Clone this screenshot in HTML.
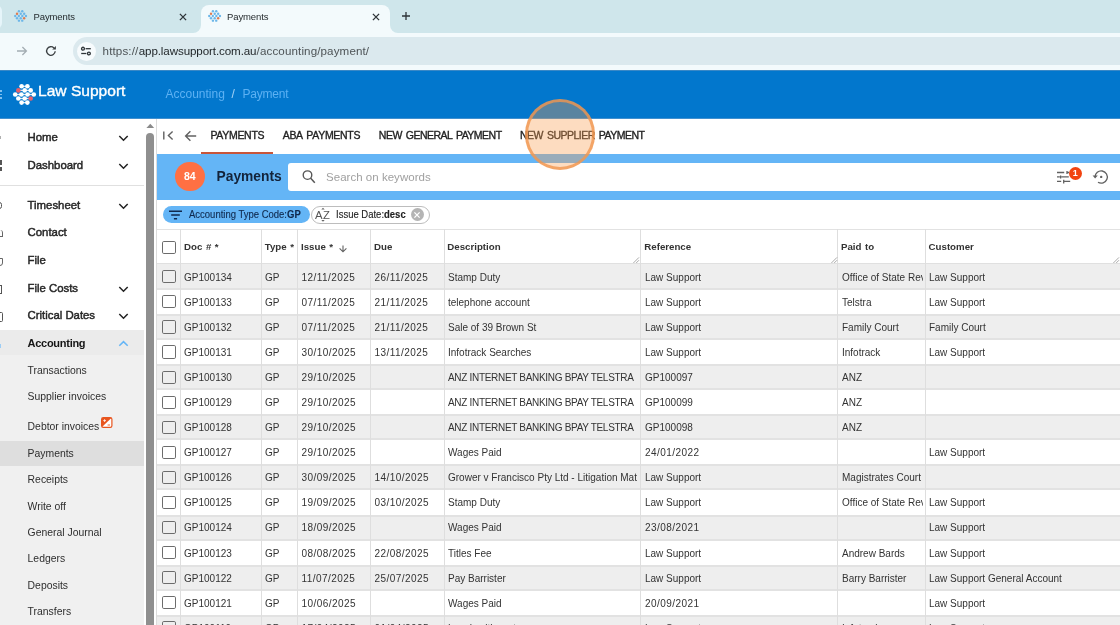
<!DOCTYPE html>
<html>
<head>
<meta charset="utf-8">
<title>Payments</title>
<style>
*{box-sizing:border-box;margin:0;padding:0}
html,body{width:1120px;height:625px;overflow:hidden;background:#fff;font-family:"Liberation Sans",sans-serif;color:#212121}
.abs{position:absolute}
svg{display:block;overflow:visible}
#root{position:relative;width:1120px;height:625px;overflow:hidden;will-change:transform}
/* browser chrome */
#tabbar{left:0;top:0;width:1120px;height:33px;background:#cfe6eb}
#tab0{left:-10px;top:5px;width:11.5px;height:24px;background:#e6f5fa;border-radius:8px}
#tab2{left:201px;top:5px;width:189px;height:28px;background:#f3fafc;border-radius:8px 8px 0 0}
.foot{top:25px;width:8px;height:8px;background:#f3fafc}
.foot i{position:absolute;left:0;top:0;width:8px;height:8px;background:#cfe6eb}
.tabtxt{font-size:9.5px;color:#252b2e;top:10.5px;letter-spacing:-0.12px;white-space:nowrap}
#urlbar{left:0;top:32.5px;width:1120px;height:38px;background:#f3fafc}
#pill{left:72.5px;top:37.25px;width:1060px;height:27.75px;border-radius:14px;background:#dbe9ee}
#pillc{left:76.5px;top:41.75px;width:19px;height:19px;border-radius:10px;background:#f7fbfd}
.url{top:43.5px;font-size:11.6px;white-space:nowrap}
/* app header */
#hdr{left:0;top:70px;width:1120px;height:49px;background:#0277cd;border-top:1px solid #3a88c6;border-bottom:1px solid #4190cf}
#brand{left:37.6px;top:83.4px;font-size:14.6px;color:#fff;white-space:nowrap;transform-origin:0 0;transform:scaleX(1.067);-webkit-text-stroke:0.35px #fff}
.crumb{top:86.5px;font-size:12px;color:#5db1f3;white-space:nowrap}
/* sidebar */
#side{left:0;top:119px;width:145px;height:506px;background:#fff}
#sideacc{left:0;top:330px;width:144px;height:296px;background:#f0f0f0}
#sideacch{left:0;top:330px;width:144px;height:25px;background:#ebebeb}
#sidesel{left:0;top:440.8px;width:144px;height:25.2px;background:#dedede}
#sdiv{left:0;top:185px;width:144px;height:1px;background:#e0e0e0}
.nav{left:27.6px;font-size:11.4px;color:#262626;white-space:nowrap;letter-spacing:-0.02px;-webkit-text-stroke:0.45px #262626}
.sub{left:27.6px;font-size:10.4px;color:#2e2e2e;white-space:nowrap}
#sbthumb{left:146.3px;top:133px;width:7.7px;height:500px;background:#8f8f8f;border-radius:4px}
#vline{left:156px;top:119px;width:1px;height:506px;background:#dcdcdc}
/* main */
.mtab{top:128.8px;font-size:10.5px;color:#222;white-space:nowrap;letter-spacing:-0.3px;-webkit-text-stroke:0.35px #222}
#ul{left:201px;top:151.5px;width:72px;height:2.3px;background:#c8553a}
#band{left:157px;top:153.8px;width:963px;height:45.8px;background:#64b5f6}
#cnt{left:175px;top:162px;width:29.5px;height:29px;border-radius:15px;background:#ff7043;color:#fff;font-size:10.5px;font-weight:bold;text-align:center;line-height:29px}
#ttl{left:216.5px;top:169px;font-size:13.8px;font-weight:bold;color:#13233a;white-space:nowrap}
#search{left:288.2px;top:162.7px;width:840px;height:28.6px;background:#fff;border-radius:3px}
#ph{left:326px;top:170.8px;font-size:11.5px;color:#a0a0a0;white-space:nowrap;letter-spacing:0.03px}
#chip1{left:163px;top:206.3px;width:146.8px;height:17px;border-radius:9px;background:#64b5f6}
#chip2{left:310.5px;top:206.2px;width:119px;height:17.4px;border-radius:9px;background:#fff;border:1px solid #bdbdbd}
.chiptxt{top:208.9px;font-size:10.2px;transform-origin:0 50%;transform:scaleX(0.932);-webkit-text-stroke:0.12px;color:#10294d;white-space:nowrap}
/* table */
#thead{left:157px;top:229px;width:963px;height:35px;background:#fff;border-top:1px solid #e2e2e2;border-bottom:1px solid #e0e0e0}
.th{top:241.3px;font-size:9.7px;font-weight:bold;color:#333;white-space:nowrap;word-spacing:0.9px}
.rowg{left:157px;width:963px;height:26px;background:#eeeeee;border-top:2px solid #e2e2e2;border-bottom:2px solid #e2e2e2}
.rowt{left:157px;width:963px;height:12px}
.c{position:absolute;top:0;font-size:10px;color:#333;white-space:nowrap;overflow:hidden}
.c.d{letter-spacing:0.45px}
.c.n{letter-spacing:-0.31px}
.vl{top:229px;width:1px;height:396px;background:#dedede}
.cb{position:absolute;left:5.4px;top:-1.6px;width:13.2px;height:13.2px;border:1.7px solid #6c6c6c;border-radius:1.8px;background:transparent}
#halo{left:524.8px;top:99.4px;width:70.5px;height:70.5px;border-radius:36px;background:rgba(249,157,78,0.356);border:3px solid rgba(240,150,80,0.8)}
</style>
</head>
<body>
<div id="root">
<div class="abs" id="tabbar"></div>
<div class="abs" id="tab0"></div>
<div class="abs" id="tab2"></div>
<div class="abs foot" style="left:193px"><i style="border-radius:0 0 8px 0"></i></div>
<div class="abs foot" style="left:390px"><i style="border-radius:0 0 0 8px"></i></div>
<svg class="abs" style="left:13.75px;top:10px" width="13.20" height="12.05" viewBox="0 0 23 21"><circle cx="8.6" cy="2.3" r="2.1" fill="#6cb6e8"/><circle cx="14.4" cy="2.3" r="2.1" fill="#6cb6e8"/><circle cx="5.3" cy="6.4" r="2.1" fill="#de7a50"/><circle cx="11.7" cy="6.4" r="2.1" fill="#6cb6e8"/><circle cx="17.7" cy="6.4" r="2.1" fill="#6cb6e8"/><circle cx="2.2" cy="10.5" r="2.1" fill="#6cb6e8"/><circle cx="8.4" cy="10.5" r="2.1" fill="#6cb6e8"/><circle cx="14.6" cy="10.5" r="2.1" fill="#6cb6e8"/><circle cx="20.8" cy="10.5" r="2.1" fill="#6cb6e8"/><circle cx="5.3" cy="14.5" r="2.1" fill="#6cb6e8"/><circle cx="11.7" cy="14.5" r="2.1" fill="#6cb6e8"/><circle cx="17.7" cy="14.5" r="2.1" fill="#de7a50"/><circle cx="8.6" cy="18.6" r="2.1" fill="#6cb6e8"/><circle cx="14.4" cy="18.6" r="2.1" fill="#6cb6e8"/></svg>
<svg class="abs" style="left:207.5px;top:10px" width="13.20" height="12.05" viewBox="0 0 23 21"><circle cx="8.6" cy="2.3" r="2.1" fill="#6cb6e8"/><circle cx="14.4" cy="2.3" r="2.1" fill="#6cb6e8"/><circle cx="5.3" cy="6.4" r="2.1" fill="#de7a50"/><circle cx="11.7" cy="6.4" r="2.1" fill="#6cb6e8"/><circle cx="17.7" cy="6.4" r="2.1" fill="#6cb6e8"/><circle cx="2.2" cy="10.5" r="2.1" fill="#6cb6e8"/><circle cx="8.4" cy="10.5" r="2.1" fill="#6cb6e8"/><circle cx="14.6" cy="10.5" r="2.1" fill="#6cb6e8"/><circle cx="20.8" cy="10.5" r="2.1" fill="#6cb6e8"/><circle cx="5.3" cy="14.5" r="2.1" fill="#6cb6e8"/><circle cx="11.7" cy="14.5" r="2.1" fill="#6cb6e8"/><circle cx="17.7" cy="14.5" r="2.1" fill="#de7a50"/><circle cx="8.6" cy="18.6" r="2.1" fill="#6cb6e8"/><circle cx="14.4" cy="18.6" r="2.1" fill="#6cb6e8"/></svg>
<div class="abs tabtxt" style="left:33.5px">Payments</div>
<div class="abs tabtxt" style="left:227px">Payments</div>
<svg class="abs" style="left:178px;top:11.600000000000001px" width="10" height="10" viewBox="-5 -5 10 10"><path d="M-3.1 -3.1 L3.1 3.1 M3.1 -3.1 L-3.1 3.1" stroke="#2d3337" stroke-width="1.3" fill="none"/></svg>
<svg class="abs" style="left:371.2px;top:11.600000000000001px" width="10" height="10" viewBox="-5 -5 10 10"><path d="M-3.1 -3.1 L3.1 3.1 M3.1 -3.1 L-3.1 3.1" stroke="#2d3337" stroke-width="1.3" fill="none"/></svg>
<svg class="abs" style="left:401px;top:11.4px" width="10" height="10" viewBox="-5 -5 10 10"><path d="M-4 0 H4 M0 -4 V4" stroke="#2d3337" stroke-width="1.3" fill="none"/></svg>
<div class="abs" id="urlbar"></div>
<div class="abs" id="pill"></div>
<div class="abs" id="pillc"></div>
<svg class="abs" style="left:16px;top:45px" width="12" height="12" viewBox="0 0 12 12"><path d="M1 6 H10.3 M6.4 2 L10.4 6 L6.4 10" stroke="#a3adb2" stroke-width="1.3" fill="none"/></svg>
<svg class="abs" style="left:45px;top:45px" width="12" height="12" viewBox="0 0 12 12"><path d="M10.2 6.3 A4.3 4.3 0 1 1 8.9 2.9" stroke="#3a3f42" stroke-width="1.35" fill="none"/><path d="M10.9 0.9 V4.6 H7.2 Z" fill="#3a3f42"/></svg>
<svg class="abs" style="left:80px;top:45.2px" width="12" height="12" viewBox="0 0 12 12"><g stroke="#30363a" stroke-width="1.3" fill="none"><circle cx="3" cy="3.7" r="1.45"/><path d="M5.6 3.7 H10.8"/><circle cx="8.9" cy="8.5" r="1.45"/><path d="M1.2 8.5 H6.3"/></g></svg>
<div class="abs url" style="left:102.6px;color:#4d5356;letter-spacing:0.12px">https://</div>
<div class="abs url" style="left:138.7px;color:#1d2225;letter-spacing:-0.1px">app.lawsupport.com.au</div>
<div class="abs url" style="left:256.6px;color:#4d5356;letter-spacing:0.12px">/accounting/payment/</div>
<div class="abs" id="hdr"></div>
<div class="abs" style="left:0;top:90px;width:2px;height:1.6px;background:#7fc0f0"></div>
<div class="abs" style="left:0;top:93.5px;width:2px;height:1.6px;background:#7fc0f0"></div>
<div class="abs" style="left:0;top:97px;width:2px;height:1.6px;background:#7fc0f0"></div>
<svg class="abs" style="left:13.1px;top:84.2px" width="23.00" height="21.00" viewBox="0 0 23 21"><path d="M8.6 2.3 H14.4" stroke="#ffffff" stroke-width="1.3" opacity="0.85"/><path d="M5.3 6.4 H17.7" stroke="#ffffff" stroke-width="1.3" opacity="0.85"/><path d="M2.2 10.5 H20.8" stroke="#ffffff" stroke-width="1.3" opacity="0.85"/><path d="M5.3 14.5 H17.7" stroke="#ffffff" stroke-width="1.3" opacity="0.85"/><path d="M8.6 18.6 H14.4" stroke="#ffffff" stroke-width="1.3" opacity="0.85"/><circle cx="8.6" cy="2.3" r="2.3" fill="#ffffff"/><circle cx="14.4" cy="2.3" r="2.3" fill="#ffffff"/><circle cx="5.3" cy="6.4" r="2.3" fill="#e8606a"/><circle cx="11.7" cy="6.4" r="2.3" fill="#ffffff"/><circle cx="17.7" cy="6.4" r="2.3" fill="#ffffff"/><circle cx="2.2" cy="10.5" r="2.3" fill="#ffffff"/><circle cx="8.4" cy="10.5" r="2.3" fill="#ffffff"/><circle cx="14.6" cy="10.5" r="2.3" fill="#ffffff"/><circle cx="20.8" cy="10.5" r="2.3" fill="#ffffff"/><circle cx="5.3" cy="14.5" r="2.3" fill="#ffffff"/><circle cx="11.7" cy="14.5" r="2.3" fill="#ffffff"/><circle cx="17.7" cy="14.5" r="2.3" fill="#e8606a"/><circle cx="8.6" cy="18.6" r="2.3" fill="#ffffff"/><circle cx="14.4" cy="18.6" r="2.3" fill="#ffffff"/></svg>
<div class="abs" id="brand">Law Support</div>
<div class="abs crumb" style="left:165.5px">Accounting</div>
<div class="abs crumb" style="left:231.5px;color:#a8d4f7">/</div>
<div class="abs crumb" style="left:242.5px;letter-spacing:-0.22px">Payment</div>
<div class="abs" id="side"></div>
<div class="abs" id="sideacc"></div><div class="abs" id="sideacch"></div>
<div class="abs" id="sidesel"></div>
<div class="abs" id="sdiv"></div>
<div class="abs nav" style="top:131.2px">Home</div>
<svg class="abs" style="left:118px;top:134px" width="11" height="9" viewBox="0 0 11 9"><path d="M1.3 2 L5.5 6.2 L9.7 2" fill="none" stroke="#222" stroke-width="1.5"/></svg>
<div class="abs nav" style="top:159.2px">Dashboard</div>
<svg class="abs" style="left:118px;top:162px" width="11" height="9" viewBox="0 0 11 9"><path d="M1.3 2 L5.5 6.2 L9.7 2" fill="none" stroke="#222" stroke-width="1.5"/></svg>
<div class="abs nav" style="top:199.2px">Timesheet</div>
<svg class="abs" style="left:118px;top:202px" width="11" height="9" viewBox="0 0 11 9"><path d="M1.3 2 L5.5 6.2 L9.7 2" fill="none" stroke="#222" stroke-width="1.5"/></svg>
<div class="abs nav" style="top:226.2px">Contact</div>
<div class="abs nav" style="top:254.2px">File</div>
<div class="abs nav" style="top:282.2px">File Costs</div>
<svg class="abs" style="left:118px;top:285px" width="11" height="9" viewBox="0 0 11 9"><path d="M1.3 2 L5.5 6.2 L9.7 2" fill="none" stroke="#222" stroke-width="1.5"/></svg>
<div class="abs nav" style="top:309.2px">Critical Dates</div>
<svg class="abs" style="left:118px;top:312px" width="11" height="9" viewBox="0 0 11 9"><path d="M1.3 2 L5.5 6.2 L9.7 2" fill="none" stroke="#222" stroke-width="1.5"/></svg>
<div class="abs nav" style="top:337.2px;font-weight:bold;font-size:11px;letter-spacing:-0.28px;-webkit-text-stroke:0;color:#151515">Accounting</div>
<svg class="abs" style="left:118px;top:339px" width="11" height="9" viewBox="0 0 11 9"><path d="M1.3 6.8 L5.5 2.6 L9.7 6.8" fill="none" stroke="#64b5f6" stroke-width="1.5"/></svg>
<div class="abs sub" style="top:365.2px">Transactions</div>
<div class="abs sub" style="top:391.2px">Supplier invoices</div>
<div class="abs sub" style="top:421.2px">Debtor invoices</div>
<div class="abs sub" style="top:448.2px">Payments</div>
<div class="abs sub" style="top:474.2px">Receipts</div>
<div class="abs sub" style="top:501.2px">Write off</div>
<div class="abs sub" style="top:527.2px">General Journal</div>
<div class="abs sub" style="top:553.2px">Ledgers</div>
<div class="abs sub" style="top:580.2px">Deposits</div>
<div class="abs sub" style="top:606.2px">Transfers</div>
<svg class="abs" style="left:146px;top:123px" width="9" height="6" viewBox="0 0 9 6"><path d="M0.4 5 L4.3 0.8 L8.2 5 Z" fill="#8a8a8a"/></svg>
<div class="abs" id="sbthumb"></div>
<div class="abs" id="vline"></div>
<svg class="abs" style="left:101px;top:417px" width="11.5" height="11" viewBox="0 0 11.5 11"><rect x="0.6" y="0.6" width="10.3" height="9.8" rx="1.6" fill="#fff" stroke="#e8551f" stroke-width="1.2"/><path d="M1 1 H10.4 L1 10 Z" fill="#e8551f"/><path d="M2.2 3.6 H5 M3.6 2.2 V5" stroke="#fff" stroke-width="0.8"/><path d="M6.6 8 H9" stroke="#e8551f" stroke-width="0.9"/></svg>
<div class="abs" style="left:0;top:135.8px;width:1.2px;height:3.4px;background:#b0b0b0"></div>
<div class="abs" style="left:0;top:160px;width:2.3px;height:5px;background:#555"></div>
<div class="abs" style="left:0;top:166.6px;width:2.3px;height:4.8px;background:#555"></div>
<div class="abs" style="left:-3px;top:201.5px;width:4.6px;height:7.5px;border:1.3px solid #555;border-radius:3px"></div>
<div class="abs" style="left:-3px;top:230px;width:6px;height:7px;border-right:1.3px solid #666;border-bottom:1.3px solid #666;border-radius:0 3px 0 0"></div>
<div class="abs" style="left:-3px;top:257.5px;width:5.6px;height:8.5px;border:1.3px solid #666;border-radius:0 0 3px 0"></div>
<div class="abs" style="left:-3px;top:284.5px;width:5.2px;height:9.5px;border:1.3px solid #555"></div>
<div class="abs" style="left:-3px;top:311.5px;width:5.6px;height:10.5px;border:1.3px solid #555;border-radius:0 1.5px 1.5px 0"></div>
<div class="abs" style="left:0;top:343.5px;width:1.4px;height:4.5px;background:#9ccdf5"></div>
<svg class="abs" style="left:162px;top:130px" width="12" height="11" viewBox="0 0 12 11"><path d="M1.8 1.4 V9.6 M10.6 1.6 L6.4 5.5 L10.6 9.4" stroke="#616161" stroke-width="1.4" fill="none"/></svg>
<svg class="abs" style="left:184px;top:130px" width="13" height="12" viewBox="0 0 13 12"><path d="M12.2 6 H1.6 M6.4 1.2 L1.6 6 L6.4 10.8" stroke="#616161" stroke-width="1.4" fill="none"/></svg>
<div class="abs mtab" style="left:210.4px">PAYMENTS</div>
<div class="abs mtab" style="left:282.7px;letter-spacing:-0.3px;word-spacing:1.5px">ABA PAYMENTS</div>
<div class="abs mtab" style="left:378.8px;letter-spacing:-0.5px;word-spacing:1.5px">NEW GENERAL PAYMENT</div>
<div class="abs mtab" style="left:520px;letter-spacing:-0.5px;word-spacing:1.5px">NEW SUPPLIER PAYMENT</div>
<div class="abs" id="ul"></div>
<div class="abs" id="band"></div>
<div class="abs" id="cnt">84</div>
<div class="abs" id="ttl">Payments</div>
<div class="abs" id="search"></div>
<svg class="abs" style="left:301px;top:169px" width="16" height="16" viewBox="0 0 16 16"><circle cx="6.5" cy="6.1" r="4.3" stroke="#555" stroke-width="1.35" fill="none"/><path d="M9.7 9.3 L13.8 13.7" stroke="#555" stroke-width="1.5" fill="none"/></svg>
<div class="abs" id="ph">Search on keywords</div>
<svg class="abs" style="left:1056px;top:170px" width="16" height="15" viewBox="0 0 16 15"><g stroke="#616161" stroke-width="1.3" fill="none"><path d="M1 2.5 H8.2 M11 1 V4 M11 2.5 H13"/><path d="M1 6.9 H3.8 M4.6 5.4 V8.4 M5.4 6.9 H12.8"/><path d="M1 11.3 H5.2 M7.7 9.8 V13.4 M7.7 11.3 H14.2"/></g></svg>
<div class="abs" style="left:1068.7px;top:167.3px;width:13px;height:13px;border-radius:7px;background:#f2430f;color:#fff;font-size:9px;font-weight:bold;text-align:center;line-height:13px">1</div>
<svg class="abs" style="left:1092px;top:169px" width="17" height="16" viewBox="0 0 17 16"><path d="M3.1 8 A6.1 6.1 0 1 1 6 13.2" stroke="#616161" stroke-width="1.35" fill="none"/><path d="M0.6 6.6 L3.1 9.6 L5.8 6.6 Z" fill="#616161"/><circle cx="9.2" cy="7.9" r="1.2" fill="#616161"/></svg>
<div class="abs" id="chip1"></div>
<div class="abs" id="chip2"></div>
<svg class="abs" style="left:168px;top:210px" width="15" height="10" viewBox="0 0 15 10"><path d="M1 1.3 H14 M3.2 5 H11.8 M5.9 8.7 H9.1" stroke="#10294d" stroke-width="1.4" fill="none"/></svg>
<div class="abs chiptxt" style="left:189px">Accounting Type Code:<b>GP</b></div>
<div class="abs" style="left:314.9px;top:208.8px;font-size:11.3px;color:#555;letter-spacing:0.5px">AZ</div>
<svg class="abs" style="left:320.6px;top:207.4px" width="4" height="15.4" viewBox="0 0 4 15"><path d="M0.3 2.4 L2 0.6 L3.7 2.4 Z M0.3 12.8 L2 14.6 L3.7 12.8 Z" fill="#666"/></svg>
<div class="abs chiptxt" style="left:336px;color:#222">Issue Date:<b>desc</b></div>
<div class="abs" style="left:410.7px;top:208.1px;width:13px;height:13px;border-radius:7px;background:#b4b4b4"></div>
<svg class="abs" style="left:412.2px;top:209.6px" width="10" height="10" viewBox="-5 -5 10 10"><path d="M-2.6 -2.6 L2.6 2.6 M2.6 -2.6 L-2.6 2.6" stroke="#fff" stroke-width="1.3" fill="none"/></svg>
<div class="abs" id="thead"></div>
<div class="abs rowg" style="top:264px;border-top-color:#eeeeee"></div>
<div class="abs rowt" style="top:271.9px"><span class="cb"></span>
<span class="c" style="left:27px;width:75px">GP100134</span>
<span class="c" style="left:108px;width:31px">GP</span>
<span class="c d" style="left:144.5px;width:67.5px">12/11/2025</span>
<span class="c d" style="left:217.5px;width:67.5px">26/11/2025</span>
<span class="c" style="left:291px;width:189px">Stamp Duty</span>
<span class="c" style="left:488px;width:190px">Law Support</span>
<span class="c" style="left:685px;width:81px">Office of State Revenue</span>
<span class="c" style="left:772px;width:191px">Law Support</span>
</div>
<div class="abs rowt" style="top:296.9px"><span class="cb"></span>
<span class="c" style="left:27px;width:75px">GP100133</span>
<span class="c" style="left:108px;width:31px">GP</span>
<span class="c d" style="left:144.5px;width:67.5px">07/11/2025</span>
<span class="c d" style="left:217.5px;width:67.5px">21/11/2025</span>
<span class="c" style="left:291px;width:189px">telephone account</span>
<span class="c" style="left:488px;width:190px">Law Support</span>
<span class="c" style="left:685px;width:81px">Telstra</span>
<span class="c" style="left:772px;width:191px">Law Support</span>
</div>
<div class="abs rowg" style="top:314px;border-top-color:#e2e2e2"></div>
<div class="abs rowt" style="top:322.0px"><span class="cb"></span>
<span class="c" style="left:27px;width:75px">GP100132</span>
<span class="c" style="left:108px;width:31px">GP</span>
<span class="c d" style="left:144.5px;width:67.5px">07/11/2025</span>
<span class="c d" style="left:217.5px;width:67.5px">21/11/2025</span>
<span class="c" style="left:291px;width:189px">Sale of 39 Brown St</span>
<span class="c" style="left:488px;width:190px">Law Support</span>
<span class="c" style="left:685px;width:81px">Family Court</span>
<span class="c" style="left:772px;width:191px">Family Court</span>
</div>
<div class="abs rowt" style="top:347.0px"><span class="cb"></span>
<span class="c" style="left:27px;width:75px">GP100131</span>
<span class="c" style="left:108px;width:31px">GP</span>
<span class="c d" style="left:144.5px;width:67.5px">30/10/2025</span>
<span class="c d" style="left:217.5px;width:67.5px">13/11/2025</span>
<span class="c" style="left:291px;width:189px">Infotrack Searches</span>
<span class="c" style="left:488px;width:190px">Law Support</span>
<span class="c" style="left:685px;width:81px">Infotrack</span>
<span class="c" style="left:772px;width:191px">Law Support</span>
</div>
<div class="abs rowg" style="top:364px;border-top-color:#e2e2e2"></div>
<div class="abs rowt" style="top:372.1px"><span class="cb"></span>
<span class="c" style="left:27px;width:75px">GP100130</span>
<span class="c" style="left:108px;width:31px">GP</span>
<span class="c d" style="left:144.5px;width:67.5px">29/10/2025</span>
<span class="c n" style="left:291px;width:189px">ANZ INTERNET BANKING BPAY TELSTRA</span>
<span class="c" style="left:488px;width:190px">GP100097</span>
<span class="c" style="left:685px;width:81px">ANZ</span>
</div>
<div class="abs rowt" style="top:397.1px"><span class="cb"></span>
<span class="c" style="left:27px;width:75px">GP100129</span>
<span class="c" style="left:108px;width:31px">GP</span>
<span class="c d" style="left:144.5px;width:67.5px">29/10/2025</span>
<span class="c n" style="left:291px;width:189px">ANZ INTERNET BANKING BPAY TELSTRA</span>
<span class="c" style="left:488px;width:190px">GP100099</span>
<span class="c" style="left:685px;width:81px">ANZ</span>
</div>
<div class="abs rowg" style="top:414px;border-top-color:#e2e2e2"></div>
<div class="abs rowt" style="top:422.2px"><span class="cb"></span>
<span class="c" style="left:27px;width:75px">GP100128</span>
<span class="c" style="left:108px;width:31px">GP</span>
<span class="c d" style="left:144.5px;width:67.5px">29/10/2025</span>
<span class="c n" style="left:291px;width:189px">ANZ INTERNET BANKING BPAY TELSTRA</span>
<span class="c" style="left:488px;width:190px">GP100098</span>
<span class="c" style="left:685px;width:81px">ANZ</span>
</div>
<div class="abs rowt" style="top:447.2px"><span class="cb"></span>
<span class="c" style="left:27px;width:75px">GP100127</span>
<span class="c" style="left:108px;width:31px">GP</span>
<span class="c d" style="left:144.5px;width:67.5px">29/10/2025</span>
<span class="c" style="left:291px;width:189px">Wages Paid</span>
<span class="c d" style="left:488px;width:190px">24/01/2022</span>
<span class="c" style="left:772px;width:191px">Law Support</span>
</div>
<div class="abs rowg" style="top:464px;border-top-color:#e2e2e2"></div>
<div class="abs rowt" style="top:472.3px"><span class="cb"></span>
<span class="c" style="left:27px;width:75px">GP100126</span>
<span class="c" style="left:108px;width:31px">GP</span>
<span class="c d" style="left:144.5px;width:67.5px">30/09/2025</span>
<span class="c d" style="left:217.5px;width:67.5px">14/10/2025</span>
<span class="c" style="left:291px;width:189px">Grower v Francisco Pty Ltd - Litigation Matter</span>
<span class="c" style="left:488px;width:190px">Law Support</span>
<span class="c" style="left:685px;width:81px">Magistrates Court</span>
</div>
<div class="abs rowt" style="top:497.4px"><span class="cb"></span>
<span class="c" style="left:27px;width:75px">GP100125</span>
<span class="c" style="left:108px;width:31px">GP</span>
<span class="c d" style="left:144.5px;width:67.5px">19/09/2025</span>
<span class="c d" style="left:217.5px;width:67.5px">03/10/2025</span>
<span class="c" style="left:291px;width:189px">Stamp Duty</span>
<span class="c" style="left:488px;width:190px">Law Support</span>
<span class="c" style="left:685px;width:81px">Office of State Revenue</span>
<span class="c" style="left:772px;width:191px">Law Support</span>
</div>
<div class="abs rowg" style="top:515px;border-top-color:#e2e2e2"></div>
<div class="abs rowt" style="top:522.4px"><span class="cb"></span>
<span class="c" style="left:27px;width:75px">GP100124</span>
<span class="c" style="left:108px;width:31px">GP</span>
<span class="c d" style="left:144.5px;width:67.5px">18/09/2025</span>
<span class="c" style="left:291px;width:189px">Wages Paid</span>
<span class="c d" style="left:488px;width:190px">23/08/2021</span>
<span class="c" style="left:772px;width:191px">Law Support</span>
</div>
<div class="abs rowt" style="top:547.5px"><span class="cb"></span>
<span class="c" style="left:27px;width:75px">GP100123</span>
<span class="c" style="left:108px;width:31px">GP</span>
<span class="c d" style="left:144.5px;width:67.5px">08/08/2025</span>
<span class="c d" style="left:217.5px;width:67.5px">22/08/2025</span>
<span class="c" style="left:291px;width:189px">Titles Fee</span>
<span class="c" style="left:488px;width:190px">Law Support</span>
<span class="c" style="left:685px;width:81px">Andrew Bards</span>
<span class="c" style="left:772px;width:191px">Law Support</span>
</div>
<div class="abs rowg" style="top:565px;border-top-color:#e2e2e2"></div>
<div class="abs rowt" style="top:572.5px"><span class="cb"></span>
<span class="c" style="left:27px;width:75px">GP100122</span>
<span class="c" style="left:108px;width:31px">GP</span>
<span class="c d" style="left:144.5px;width:67.5px">11/07/2025</span>
<span class="c d" style="left:217.5px;width:67.5px">25/07/2025</span>
<span class="c" style="left:291px;width:189px">Pay Barrister</span>
<span class="c" style="left:488px;width:190px">Law Support</span>
<span class="c" style="left:685px;width:81px">Barry Barrister</span>
<span class="c" style="left:772px;width:191px">Law Support General Account</span>
</div>
<div class="abs rowt" style="top:597.5px"><span class="cb"></span>
<span class="c" style="left:27px;width:75px">GP100121</span>
<span class="c" style="left:108px;width:31px">GP</span>
<span class="c d" style="left:144.5px;width:67.5px">10/06/2025</span>
<span class="c" style="left:291px;width:189px">Wages Paid</span>
<span class="c d" style="left:488px;width:190px">20/09/2021</span>
<span class="c" style="left:772px;width:191px">Law Support</span>
</div>
<div class="abs rowg" style="top:615px;border-top-color:#e2e2e2"></div>
<div class="abs rowt" style="top:622.6px"><span class="cb"></span>
<span class="c" style="left:27px;width:75px">GP100119</span>
<span class="c" style="left:108px;width:31px">GP</span>
<span class="c d" style="left:144.5px;width:67.5px">17/04/2025</span>
<span class="c d" style="left:217.5px;width:67.5px">01/04/2025</span>
<span class="c" style="left:291px;width:189px">Lunch with partners</span>
<span class="c" style="left:488px;width:190px">Law Support</span>
<span class="c" style="left:685px;width:81px">Infotrack</span>
<span class="c" style="left:772px;width:191px">Law Support</span>
</div>
<div class="abs vl" style="left:180px"></div>
<div class="abs vl" style="left:261px"></div>
<div class="abs vl" style="left:297px"></div>
<div class="abs vl" style="left:370px"></div>
<div class="abs vl" style="left:444px"></div>
<div class="abs vl" style="left:640px"></div>
<div class="abs vl" style="left:837px"></div>
<div class="abs vl" style="left:925px"></div>
<span class="abs cb" style="left:162.4px;top:240.7px"></span>
<div class="abs th" style="left:184px">Doc # *</div>
<div class="abs th" style="left:264.7px">Type *</div>
<div class="abs th" style="left:301px">Issue *</div>
<div class="abs th" style="left:374px">Due</div>
<div class="abs th" style="left:447.3px">Description</div>
<div class="abs th" style="left:644.3px">Reference</div>
<div class="abs th" style="left:841px">Paid to</div>
<div class="abs th" style="left:928.6px">Customer</div>
<svg class="abs" style="left:337.5px;top:243px" width="10" height="10" viewBox="0 0 10 10"><path d="M5 2.4 V8.6 M1.6 5.4 L5 8.8 L8.4 5.4" stroke="#616161" stroke-width="1.1" fill="none"/></svg>
<svg class="abs" style="left:633.2px;top:256.8px" width="6.4" height="6.4" viewBox="0 0 8 8"><path d="M0.5 7.5 L7.5 0.5 M4 7.5 L7.5 4" stroke="#8a8a8a" stroke-width="0.9" fill="none"/></svg>
<svg class="abs" style="left:831.2px;top:256.8px" width="6.4" height="6.4" viewBox="0 0 8 8"><path d="M0.5 7.5 L7.5 0.5 M4 7.5 L7.5 4" stroke="#8a8a8a" stroke-width="0.9" fill="none"/></svg>
<svg class="abs" style="left:1113.2px;top:256.8px" width="6.4" height="6.4" viewBox="0 0 8 8"><path d="M0.5 7.5 L7.5 0.5 M4 7.5 L7.5 4" stroke="#8a8a8a" stroke-width="0.9" fill="none"/></svg>
<div class="abs" id="halo"></div>
</div>
</body>
</html>
